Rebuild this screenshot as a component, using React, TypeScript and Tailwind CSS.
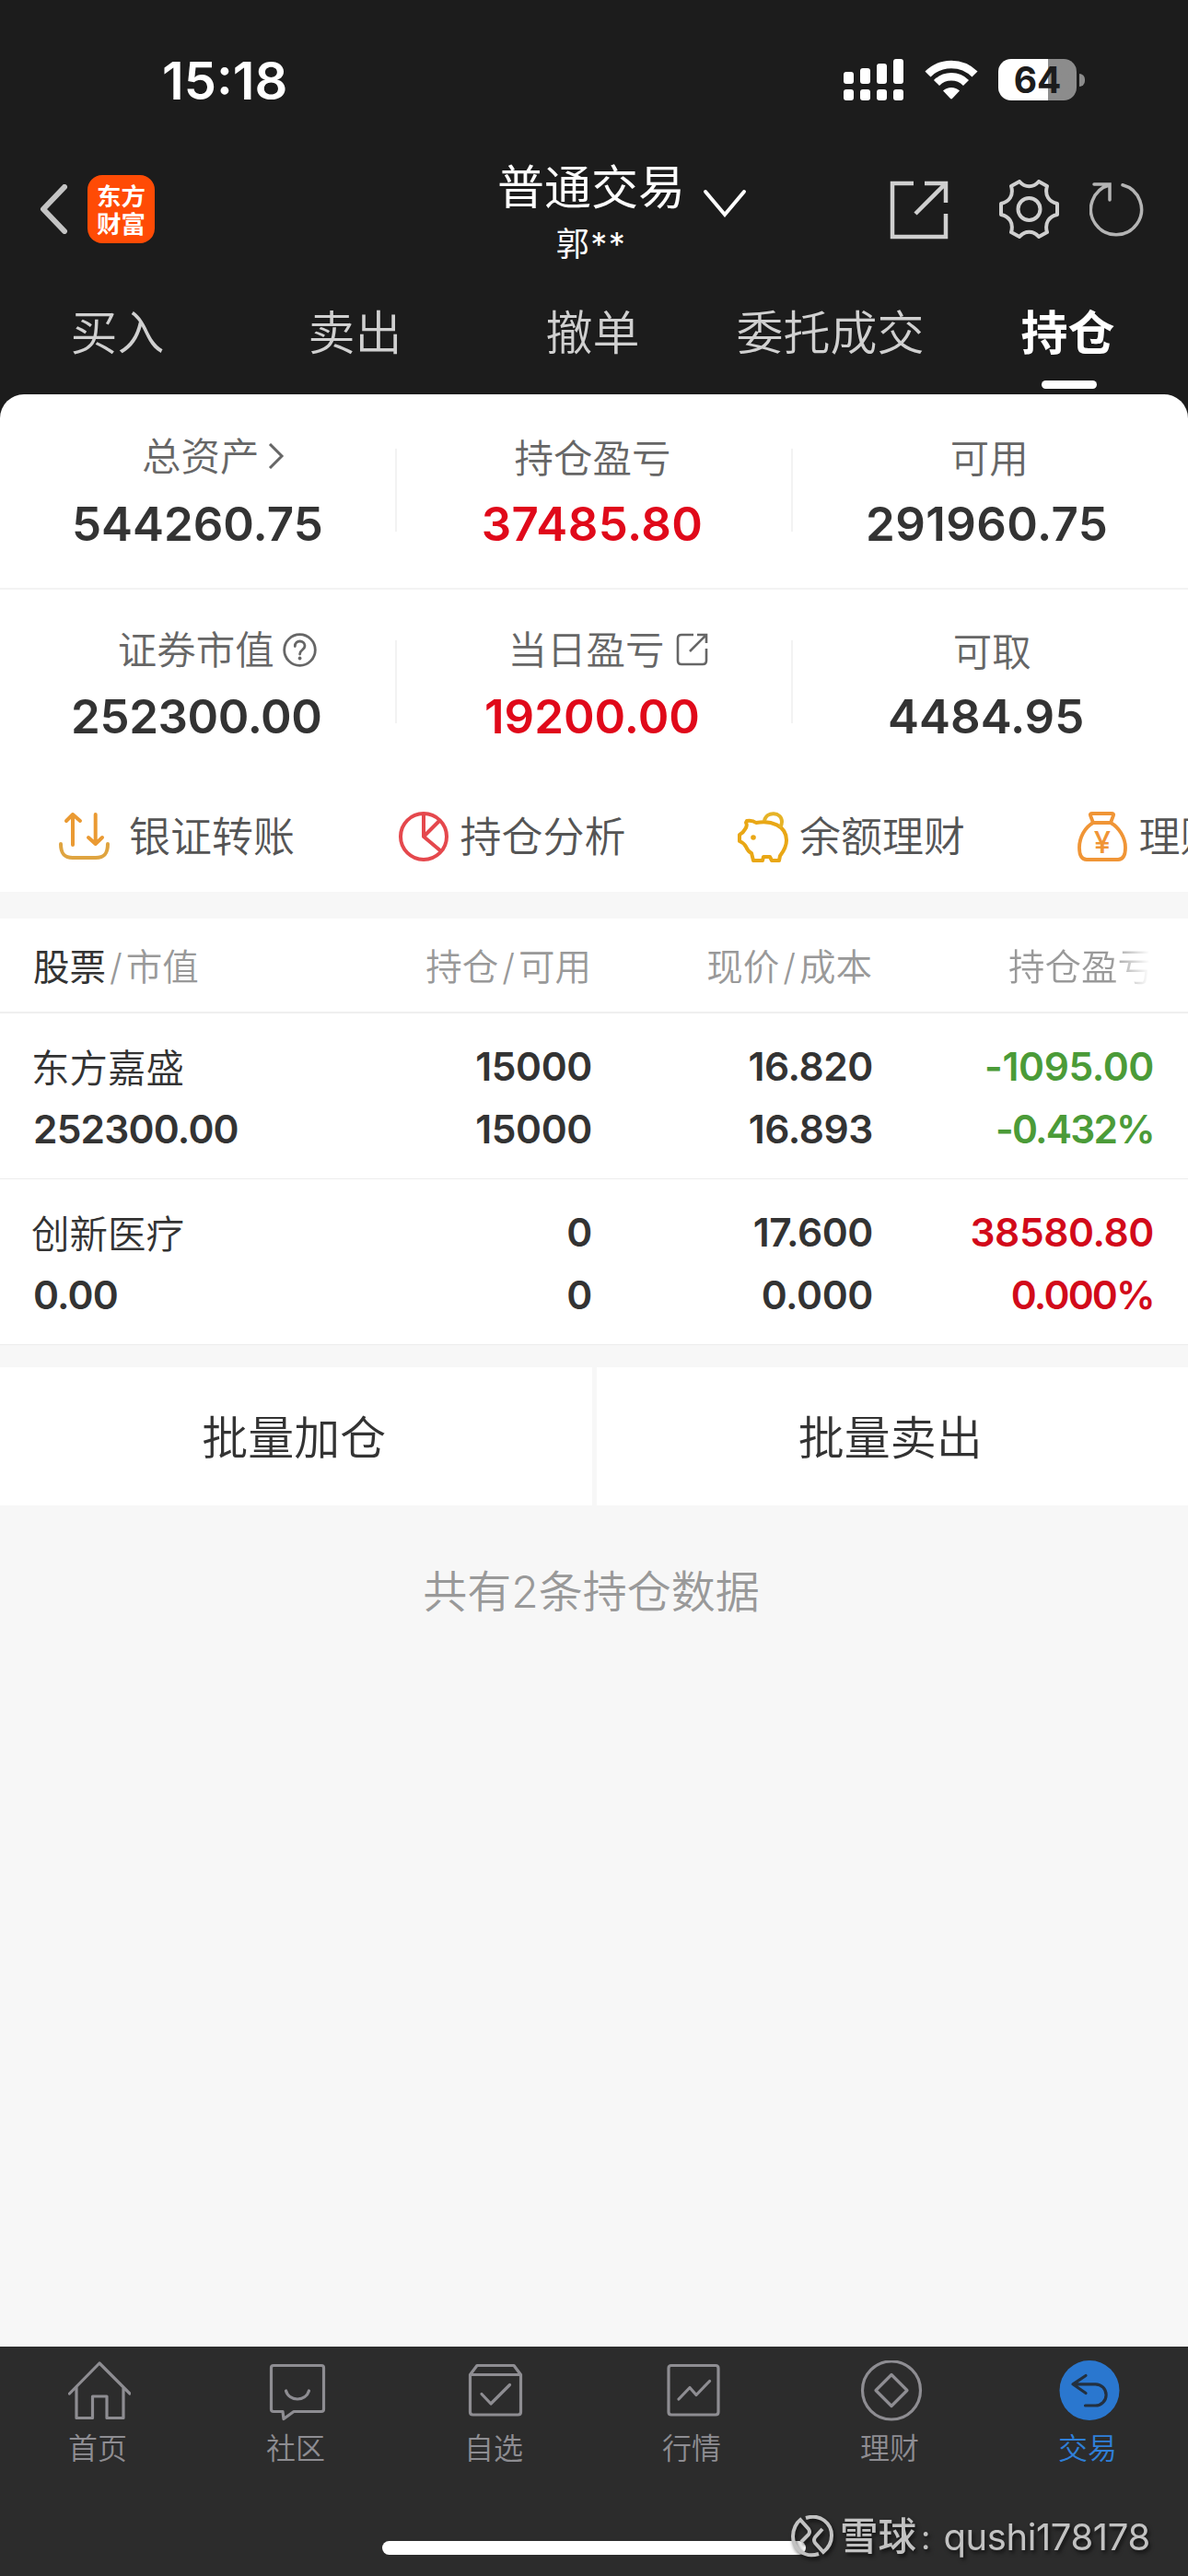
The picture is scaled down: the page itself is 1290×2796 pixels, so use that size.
import clsx from 'clsx'
import type { ReactNode } from 'react'
import { useState } from 'react'

const tabs = ['买入', '卖出', '撤单', '委托成交', '持仓']

const holdings = [
  {
    name: '东方嘉盛',
    value: '252300.00',
    amount: '15000',
    available: '15000',
    price: '16.820',
    cost: '16.893',
    profit: '-1095.00',
    percent: '-0.432%',
    down: true,
  },
  {
    name: '创新医疗',
    value: '0.00',
    amount: '0',
    available: '0',
    price: '17.600',
    cost: '0.000',
    profit: '38580.80',
    percent: '0.000%',
    down: false,
  },
]

const StatusBar = () => (
  <div className="flex h-[173px] items-center pl-[176px]">
    <span className="mt-[3px] w-[740px] text-[56px] leading-none font-semibold text-white">
      15:18
    </span>
    <svg width="65" height="45" viewBox="0 0 65 45" fill="#fff">
      <rect x="0" y="14" width="11" height="13" rx="3" />
      <rect x="18" y="10" width="11" height="17" rx="3" />
      <rect x="36" y="5" width="11" height="22" rx="3" />
      <rect x="54" y="0" width="11" height="27" rx="3" />
      <rect x="0" y="33" width="11" height="12" rx="3" />
      <rect x="18" y="33" width="11" height="12" rx="3" />
      <rect x="36" y="33" width="11" height="12" rx="3" />
      <rect x="54" y="33" width="11" height="12" rx="3" />
    </svg>
    <svg className="ml-[23px]" width="58" height="43" viewBox="0 0 58 43">
      <path
        d="M3.500 15.500A36 36 0 0 1 54.500 15.500"
        fill="none"
        stroke="#fff"
        strokeWidth="8.500"
      />
      <path
        d="M13 25A22.500 22.500 0 0 1 45 25"
        fill="none"
        stroke="#fff"
        strokeWidth="8.500"
      />
      <path
        d="M20 33.500A13 13 0 0 1 38 33.500L30.200 41.800Q29 43 27.800 41.800Z"
        fill="#fff"
      />
    </svg>
    <div className="ml-[22px] flex h-[45px] w-[85px] items-center justify-center rounded-[14px] bg-linear-to-r from-white from-64% to-[#8c8c8c] to-64%">
      <span className="text-[39px] leading-none font-bold text-[#1c1c1c]">
        64
      </span>
    </div>
    <div className="ml-[3px] h-[14px] w-[6px] rounded-r-full bg-[#8c8c8c]" />
  </div>
)

const NavBar = () => (
  <div className="flex h-[112px] items-start">
    <svg
      className="mt-[27px] ml-[42px]"
      width="32"
      height="54"
      viewBox="0 0 32 54"
      fill="none"
      stroke="#c4c4c4"
      strokeWidth="6"
      strokeLinecap="round"
      strokeLinejoin="round"
    >
      <path d="M28 3L5 27L28 51" />
    </svg>
    <div className="mt-[17px] ml-[21px] flex h-[74px] w-[73px] flex-col items-center justify-center rounded-[16px] bg-[#ff4b05] pt-[2px] text-[26.500px] leading-[30px] font-bold text-white">
      <span>东方</span>
      <span>财富</span>
    </div>
    <div className="mt-[5px] ml-[372px] flex w-[204px] flex-col items-center text-white">
      <span className="text-[51px] leading-[52px] whitespace-nowrap">
        普通交易
      </span>
      <span className="mt-[16px] text-[36px] leading-[38px] tracking-[1.500px]">
        郭**
      </span>
    </div>
    <svg
      className="mt-[31px] ml-[19px]"
      width="48"
      height="34"
      viewBox="0 0 48 34"
      fill="none"
      stroke="#fff"
      strokeWidth="4"
      strokeLinecap="round"
    >
      <path d="M3 4L24 29L45 4" />
    </svg>
    <svg
      className="mt-[23px] ml-[155px]"
      width="64"
      height="64"
      viewBox="0 0 64 64"
      fill="none"
      stroke="#cfcfcf"
      strokeWidth="4.500"
    >
      <path d="M26 3H3V61H61V36M38 3H61V24M61 3L28 36" />
    </svg>
    <svg
      className="mt-[22px] ml-[55px]"
      width="65"
      height="64"
      viewBox="0 0 65 64"
      fill="none"
      stroke="#cfcfcf"
      strokeWidth="4"
      strokeLinejoin="round"
    >
      <path d="M22 2C28 9 37 9 43 2L52 7C49 17 54 24 63 26V38C54 40 49 47 52 57L43 62C37 55 28 55 22 62L13 57C16 47 11 40 2 38V26C11 24 16 17 13 7Z" />
      <circle cx="32.500" cy="32" r="12" />
    </svg>
    <svg
      className="mt-6 ml-[33px]"
      width="60"
      height="60"
      viewBox="0 0 60 60"
      fill="none"
      stroke="#b4b4b4"
      strokeWidth="3.500"
      strokeLinecap="round"
    >
      <path d="M36 3.700A27.500 27.500 0 1 1 22 3.700M5 3H22V20" />
    </svg>
  </div>
)

type SummaryItemProps = {
  label: string
  value: string
  red?: boolean
  icon?: ReactNode
  labelClass?: string
  valueClass?: string
}

const SummaryItem = ({
  label,
  value,
  red,
  icon,
  labelClass,
  valueClass,
}: SummaryItemProps) => (
  <div className="flex flex-1 flex-col items-center">
    <div
      className={clsx(
        'flex h-[44px] items-center text-[42.500px] leading-[44px] font-[350] text-[#666]',
        labelClass,
      )}
    >
      <span className="pt-[2px]">{label}</span>
      {icon}
    </div>
    <div
      className={clsx(
        'mt-[22px] text-[51px] leading-[56px] font-[560]',
        red ? 'text-[#e0091a]' : 'text-[#333]',
        valueClass,
      )}
    >
      {value}
    </div>
  </div>
)

const Divider = () => <div className="mt-3 h-[90px] w-[2px] bg-[#f2f2f2]" />

const Summary = () => (
  <>
    <div className="flex h-[212px] border-b-2 border-[#f3f3f3] pt-[47px]">
      <SummaryItem
        label="总资产"
        value="544260.75"
        labelClass="pl-[34px] relative -top-[2px]"
        icon={
          <svg
            className="ml-[9px]"
            width="18"
            height="28"
            viewBox="0 0 18 28"
            fill="none"
            stroke="#666"
            strokeWidth="3"
          >
            <path d="M2 1L15 14L2 27" />
          </svg>
        }
      />
      <Divider />
      <SummaryItem
        label="持仓盈亏"
        value="37485.80"
        red
        labelClass="pr-[3px]"
        valueClass="pr-1 tracking-[0.4px]"
      />
      <Divider />
      <SummaryItem
        label="可用"
        value="291960.75"
        labelClass="pr-[3px]"
        valueClass="pr-2 tracking-[0.4px]"
      />
    </div>
    <div className="flex h-[200px] pt-[43px]">
      <SummaryItem
        label="证券市值"
        value="252300.00"
        labelClass="pl-[43px]"
        valueClass="pr-[2px] tracking-[-0.4px] mt-[23px]"
        icon={
          <svg className="ml-[9px]" width="37" height="37" viewBox="0 0 37 37">
            <circle
              cx="18.500"
              cy="18.500"
              r="16.800"
              fill="none"
              stroke="#666"
              strokeWidth="2.800"
            />
            <path
              d="M13.300 14.500C13.300 7 24 7.500 24 14C24 18.500 18.600 18 18.600 23"
              fill="none"
              stroke="#666"
              strokeWidth="2.800"
              strokeLinecap="round"
            />
            <circle cx="18.600" cy="27.500" r="1.900" fill="#666" />
          </svg>
        }
      />
      <Divider />
      <SummaryItem
        label="当日盈亏"
        value="19200.00"
        red
        labelClass="pl-[31px]"
        valueClass="pr-1 mt-[23px]"
        icon={
          <svg
            className="ml-3"
            width="36"
            height="36"
            viewBox="0 0 36 36"
            fill="none"
            stroke="#666"
            strokeWidth="2.600"
          >
            <path d="M19 2H6Q2 2 2 6V30Q2 34 6 34H29Q33 34 33 30V17M23 2H33V11M33 2L15 20" />
          </svg>
        }
      />
      <Divider />
      <SummaryItem
        label="可取"
        value="4484.95"
        labelClass="pl-[3px] relative top-[2px]"
        valueClass="pr-[10px] mt-[23px]"
      />
    </div>
  </>
)

const shortcuts = [
  {
    label: '银证转账',
    gap: 'gap-[21px]',
    icon: (
      <svg
        width="55"
        height="55"
        viewBox="0 0 55 55"
        fill="none"
        stroke="#ea9a33"
        strokeWidth="4"
        strokeLinecap="round"
        strokeLinejoin="round"
      >
        <path d="M15 36V3M8 10L15 3L23 10M39.700 3V35M32 28L39.700 35L47 28" />
        <path d="M2 35C2 46 6 50 15 50H40C49 50 53 46 53 35" stroke="#dfa440" />
      </svg>
    ),
  },
  {
    label: '持仓分析',
    gap: 'gap-3',
    icon: (
      <svg
        width="55"
        height="55"
        viewBox="0 0 55 55"
        fill="none"
        stroke="#e5484d"
        strokeWidth="4"
        strokeLinejoin="round"
      >
        <circle cx="27" cy="27" r="25" />
        <path d="M44 10L27 27V2M27 27L46 43" />
      </svg>
    ),
  },
  {
    label: '余额理财',
    gap: 'gap-3',
    icon: (
      <svg
        width="55"
        height="55"
        viewBox="0 0 55 55"
        fill="none"
        stroke="#e9a715"
        strokeWidth="4"
        strokeLinejoin="round"
      >
        <path d="M10 10Q16 9 20 12C36 9 53 15 53 31C53 39 49 44 46 48L45 53H37L35 49H28L27 53H17L15 45Q11 43 9 38Q7 34 2 32V25Q6 23 8 19Q11 15 9 12Z" />
        <path d="M29 10C31 -1 48 0 48 11Q48 14 46 17" stroke="#e6b327" />
        <circle cx="17" cy="28" r="2.800" fill="#e9a715" stroke="none" />
      </svg>
    ),
  },
  {
    label: '理财',
    gap: 'gap-3',
    icon: (
      <svg
        width="55"
        height="55"
        viewBox="0 0 55 55"
        fill="none"
        stroke="#f09536"
        strokeWidth="3.800"
        strokeLinejoin="round"
      >
        <path d="M16 2H37Q40 2 39 4L36 12H17L14 4Q13 2 16 2Z" />
        <path d="M17 12C8 17 2 28 2 39Q2 52 10 52H44Q52 52 52 39C52 28 45 17 36 12" />
        <text
          x="27"
          y="44.500"
          textAnchor="middle"
          fontSize="33"
          fill="#f09536"
          stroke="none"
          className="font-medium"
        >
          ¥
        </text>
      </svg>
    ),
  },
]

const Shortcuts = () => (
  <div className="flex h-[128px] overflow-hidden pt-[38px] pl-[64px]">
    {shortcuts.map((item) => (
      <div
        key={item.label}
        className={clsx(
          'flex h-[60px] w-[368.500px] shrink-0 items-center',
          item.gap,
        )}
      >
        {item.icon}
        <span className="pt-[2px] text-[45px] leading-[60px] font-[350] whitespace-nowrap text-[#555]">
          {item.label}
        </span>
      </div>
    ))}
  </div>
)

const Slash = () => <span className="mr-1 ml-1">/</span>

const Holdings = () => (
  <div className="bg-white">
    <div className="grid h-[103px] grid-cols-[300px_306px_305px_306px] border-b-2 border-[#efefef] pl-[36px] text-right text-[39.500px] leading-[106px] font-[350] text-[#999]">
      <div className="text-left">
        <span className="font-normal text-[#333]">股票</span>
        <Slash />
        市值
      </div>
      <div>
        持仓
        <Slash />
        可用
      </div>
      <div>
        现价
        <Slash />
        成本
      </div>
      <div>
        <span className="inline-block bg-linear-to-r from-[#999] from-70% to-white to-97% bg-clip-text text-transparent">
          持仓盈亏
        </span>
      </div>
    </div>
    {holdings.map((row) => (
      <div
        key={row.name}
        className="grid h-[180px] grid-cols-[301px_306px_305px_305px] border-b border-[#ececec] pt-[24px] pl-[36px] text-right text-[42.500px] leading-[68px] font-[560] tracking-[-0.4px] text-[#333]"
      >
        <div className="text-left tracking-[-0.8px]">
          <p className="relative top-[2px] right-[2px] text-[41.500px] font-[350] tracking-normal">
            {row.name}
          </p>
          <p>{row.value}</p>
        </div>
        <div>
          <p>{row.amount}</p>
          <p>{row.available}</p>
        </div>
        <div>
          <p>{row.price}</p>
          <p>{row.cost}</p>
        </div>
        <div className={row.down ? 'text-[#4b9b38]' : 'text-[#d20a1a]'}>
          <p>{row.profit}</p>
          <p className="tracking-[-1.800px]">{row.percent}</p>
        </div>
      </div>
    ))}
  </div>
)

const navItems = [
  {
    label: '首页',
    icon: (
      <path d="M1.500 36L34 3L67 36M9 29V62.500H26.500V39H42V62.500H60V29" />
    ),
  },
  {
    label: '社区',
    icon: (
      <path d="M8 5.500H60Q62.500 5.500 62.500 8V53Q62.500 55.500 60 55.500H30L19 63.500L18 55.500H8Q5.500 55.500 5.500 53V8Q5.500 5.500 8 5.500ZM21.500 33C25 45 43 45 46.500 33" />
    ),
  },
  {
    label: '自选',
    icon: (
      <path d="M6.500 15.500L14 5.500H54L61.500 15.500V56Q61.500 59 58.500 59H9.500Q6.500 59 6.500 56ZM6.500 15.500H61.500M19 36.500L29 47L49.500 26.500" />
    ),
  },
  {
    label: '行情',
    icon: (
      <path d="M10 5.500H58Q61 5.500 61 8.500V56Q61 59 58 59H10Q7 59 7 56V8.500Q7 5.500 10 5.500ZM18 42L30 29.500L37 37.500L51.500 22.500" />
    ),
  },
  {
    label: '理财',
    icon: (
      <>
        <circle cx="34" cy="32.500" r="31.500" />
        <path d="M34 15.500L51 32.500L34 49.500L17 32.500Z" />
      </>
    ),
  },
  {
    label: '交易',
    active: true,
    icon: (
      <>
        <circle cx="34" cy="32.500" r="32.500" fill="#2a77cf" stroke="none" />
        <path
          d="M30 16.500L16 25.800L30 35.500M16 25.800H40.500A11.600 11.600 0 0 1 40.500 49H29.500"
          stroke="#23303f"
        />
      </>
    ),
  },
]

const BottomNav = () => (
  <nav className="relative h-[249px] bg-[#2c2c2c] pt-[15px]">
    <div className="flex">
      {navItems.map((item) => (
        <div key={item.label} className="flex flex-1 flex-col items-center">
          <svg
            width="68"
            height="66"
            viewBox="0 0 68 66"
            fill="none"
            stroke="#8e8d92"
            strokeWidth="3.200"
            strokeLinecap="round"
            strokeLinejoin="round"
          >
            {item.icon}
          </svg>
          <span
            className={clsx(
              'mt-[11px] mr-[3px] text-[32px] leading-[38px] font-[350]',
              item.active ? 'text-[#2f7fd8]' : 'text-[#8e8d92]',
            )}
          >
            {item.label}
          </span>
        </div>
      ))}
    </div>
    <div className="mt-[81px] ml-[415px] h-[15px] w-[460px] rounded-full bg-white" />
    {/* user watermark, partly over the home indicator */}
    <div className="absolute top-[180px] left-[859px] flex h-[52px] items-center text-[#c2c2c2] drop-shadow-[2px_3px_2px_rgba(0,0,0,0.6)]">
      <svg
        width="46"
        height="46"
        viewBox="0 0 46 46"
        fill="none"
        stroke="#c2c2c2"
        strokeWidth="4"
      >
        <path d="M16 3C32 -2 44 9 44 22C44 30 40 36 35 40L26 30Q24 27 26 24L34 15" />
        <path d="M30 42C14 47 2 36 2 23C2 15 6 8 10 5L19 15Q21 18 19 21L11 29" />
      </svg>
      <span className="ml-[7px] pt-[2px] text-[41.500px] leading-none font-medium">
        雪球
      </span>
      <span className="ml-[5px] pt-[2px] text-[36px] leading-none">:</span>
      <span className="ml-[14px] pt-[2px] text-[40px] leading-none font-normal tracking-[-0.4px]">
        qushi178178
      </span>
    </div>
  </nav>
)

const App = () => {
  const [activeTab, setActiveTab] = useState('持仓')

  return (
    <main className="flex h-[2796px] w-[1290px] flex-col overflow-hidden bg-[#f7f7f7] font-['Inter','Noto_Sans_CJK_SC',sans-serif]">
      <div className="bg-[#1c1c1c]">
        <StatusBar />
        <NavBar />
        <div className="flex h-[143px]">
          {tabs.map((tab) => (
            <button
              key={tab}
              onClick={() => setActiveTab(tab)}
              className={clsx(
                'flex flex-1 flex-col items-center pt-[50px] text-[51px] leading-[54px]',
                tab === activeTab
                  ? 'font-bold text-white'
                  : 'font-[350] text-[#d0d0d0]',
              )}
            >
              <span className="pr-[3px]">{tab}</span>
              {tab === activeTab && (
                <span className="mt-[24px] h-[9px] w-[60px] rounded-full bg-white" />
              )}
            </button>
          ))}
        </div>
        <section className="rounded-t-[26px] bg-white">
          <Summary />
          <Shortcuts />
        </section>
      </div>

      <div className="mt-[29px]">
        <Holdings />
      </div>

      <div className="mt-6 flex gap-[5px] text-[50px] leading-[154px] font-[350] text-[#333]">
        <button className="h-[150px] flex-1 bg-white pr-[4px]">批量加仓</button>
        <button className="h-[150px] flex-1 bg-white pr-[4px]">批量卖出</button>
      </div>
      <p className="mt-[64px] flex-1 pr-[6px] text-center text-[48px] leading-[60px] font-[350] text-[#999]">
        共有2条持仓数据
      </p>

      <BottomNav />
    </main>
  )
}

export default App
